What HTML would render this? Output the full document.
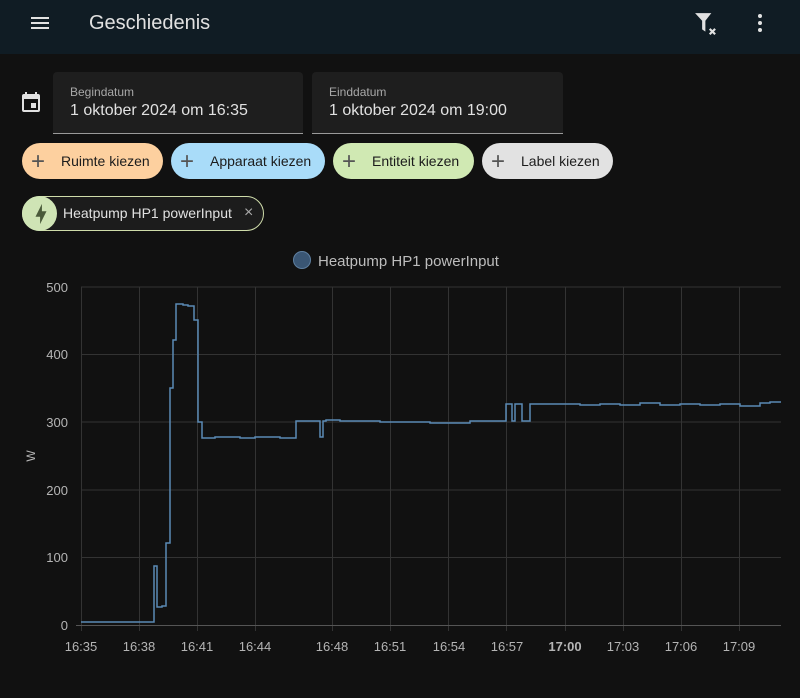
<!DOCTYPE html>
<html><head><meta charset="utf-8"><style>
*{margin:0;padding:0;box-sizing:border-box}
body{width:800px;height:698px;background:#111111;font-family:"Liberation Sans",sans-serif;color:#e1e1e1;position:relative;overflow:hidden}
.hdr{position:absolute;left:0;top:0;width:800px;height:54px;background:#101c24}
.title{position:absolute;left:89px;top:12px;font-size:20px;color:#e1e1e1}
.field{position:absolute;top:72px;height:62px;background:#1e1e1e;border-radius:4px 4px 0 0;border-bottom:1px solid #9a9a9a}
.field .l{position:absolute;left:17px;top:13px;font-size:12px;color:#a8a8a8}
.field .v{position:absolute;left:17px;top:30px;font-size:16px;color:#e1e1e1}
.chip{position:absolute;top:143px;height:36px;border-radius:18px;color:#1c1c1c;font-size:14px;line-height:36px;padding-left:39px}
.chip span.p{position:absolute;left:9px;top:1px;font-size:24px;font-weight:300;color:#555}
.ent{position:absolute;left:22px;top:196px;width:242px;height:35px;border:1px solid #cfdcaa;border-radius:18px;background:#1c1c1c}
</style></head><body>
<div class="hdr">
<svg style="position:absolute;left:28px;top:11px" width="24" height="24" viewBox="0 0 24 24"><path d="M3 6h18v2H3zM3 11h18v2H3zM3 16h18v2H3z" fill="#e1e1e1"/></svg>
<div class="title">Geschiedenis</div>
<svg style="position:absolute;left:694px;top:11px" width="26" height="26" viewBox="0 0 24 24"><path d="M1 2h15l-5.5 7v10l-3-2V9z" fill="#e1e1e1"/><path d="M14.5 16.5l5 5M19.5 16.5l-5 5" stroke="#e1e1e1" stroke-width="2"/></svg>
<svg style="position:absolute;left:748px;top:11px" width="24" height="24" viewBox="0 0 24 24"><circle cx="12" cy="5" r="2" fill="#e1e1e1"/><circle cx="12" cy="12" r="2" fill="#e1e1e1"/><circle cx="12" cy="19" r="2" fill="#e1e1e1"/></svg>
</div>
<svg style="position:absolute;left:19px;top:90px" width="24" height="24" viewBox="0 0 24 24"><path d="M19 4h-1V2h-2v2H8V2H6v2H5a2 2 0 0 0-2 2v14a2 2 0 0 0 2 2h14a2 2 0 0 0 2-2V6a2 2 0 0 0-2-2zm0 16H5V9h14zM12 13h5v5h-5z" fill="#e1e1e1"/></svg>
<div class="field" style="left:53px;width:250px"><div class="l">Begindatum</div><div class="v">1 oktober 2024 om 16:35</div></div>
<div class="field" style="left:312px;width:251px"><div class="l">Einddatum</div><div class="v">1 oktober 2024 om 19:00</div></div>
<div class="chip" style="left:22px;width:141px;background:#fdd09f"><span class="p">+</span>Ruimte kiezen</div>
<div class="chip" style="left:171px;width:154px;background:#a9dcf9"><span class="p">+</span>Apparaat kiezen</div>
<div class="chip" style="left:333px;width:141px;background:#d0e9b3"><span class="p">+</span>Entiteit kiezen</div>
<div class="chip" style="left:482px;width:131px;background:#e2e2e2"><span class="p">+</span>Label kiezen</div>
<div class="ent">
<div style="position:absolute;left:-1px;top:-1px;width:35px;height:35px;border-radius:50%;background:#cfe4b5"></div>
<svg style="position:absolute;left:7px;top:6px" width="22" height="22" viewBox="0 0 24 24"><path d="M11 15H6l7-14v8h5l-7 14z" fill="#4a5a3a"/></svg>
<div style="position:absolute;left:40px;top:8px;font-size:14px;color:#e1e1e1">Heatpump HP1 powerInput</div>
<div style="position:absolute;left:221px;top:7px;font-size:16px;color:#aaa">×</div>
</div>
<svg style="position:absolute;left:0;top:240px" width="800" height="458" viewBox="0 240 800 458" font-family="Liberation Sans, sans-serif">
<circle cx="302" cy="260" r="8.5" fill="#3a5674" stroke="#5e7fa0" stroke-width="1"/>
<text x="318" y="266" font-size="15" fill="#bdbdbd">Heatpump HP1 powerInput</text>
<g stroke="#333" stroke-width="1">
<path d="M81 287H781M81 354.5H781M81 422H781M81 490H781M81 557.5H781"/>
<path d="M81.5 287V631M139.5 287V631M197.5 287V631M255.5 287V631M332.5 287V631M390.5 287V631M448.5 287V631M506.5 287V631M565.5 287V631M623.5 287V631M681.5 287V631M739.5 287V631"/>
</g>
<path d="M76 625.5H781" stroke="#555" stroke-width="1"/>
<g fill="#b5b5b5" font-size="13" text-anchor="end">
<text x="68" y="292">500</text><text x="68" y="359">400</text><text x="68" y="427">300</text><text x="68" y="495">200</text><text x="68" y="562">100</text><text x="68" y="630">0</text>
</g>
<text x="35" y="456" font-size="12" fill="#b5b5b5" transform="rotate(-90 35 456)" text-anchor="middle">W</text>
<g fill="#b5b5b5" font-size="13" text-anchor="middle">
<text x="81" y="651">16:35</text><text x="139" y="651">16:38</text><text x="197" y="651">16:41</text><text x="255" y="651">16:44</text><text x="332" y="651">16:48</text><text x="390" y="651">16:51</text><text x="449" y="651">16:54</text><text x="507" y="651">16:57</text><text x="565" y="651" font-weight="bold">17:00</text><text x="623" y="651">17:03</text><text x="681" y="651">17:06</text><text x="739" y="651">17:09</text>
</g>
<path fill="none" stroke="#5b8ab5" stroke-width="1.5" d="M81 622H154V566H157V607H162V606H166V543H170V388H173V340H176V304H183V305H188V306H194V320H198V422H202V438H215V437H240V438H255V437H280V438H296V421H320V437H323V421H326V420H340V421H380V422H430V423H470V421H505V421H506V404H512V421H515V404H522V421H530V404H560V404H580V405H600V404H620V405H640V403H660V405H680V404H700V405H720V404H740V406H760V403H770V402H781"/>
</svg>
</body></html>
